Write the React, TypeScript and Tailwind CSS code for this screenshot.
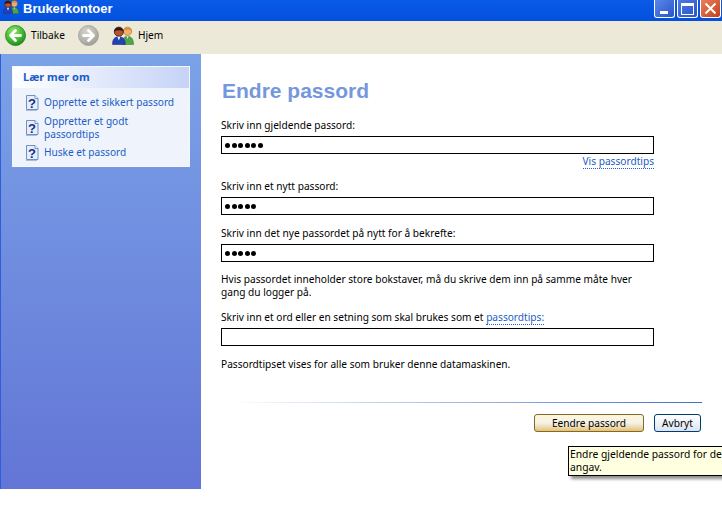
import React from "react";

const HelpIcon = () => (
  <svg width="14" height="17" viewBox="0 0 14 17" className="flex-none">
    <path d="M1.500 1.500h8.500l3 3v11h-11.500z" fill="#e6eefa" stroke="#6f90c8" />
    <path d="M12 16.500h-11" stroke="#a9bcdc" />
    <path d="M10 1.500v3h3" fill="#ffffff" stroke="#6f90c8" />
    <text x="7" y="13.500" textAnchor="middle" fontSize="13" fontWeight="700" fill="#17307f" fontFamily="Liberation Sans">?</text>
  </svg>
);

const CircleArrow = ({ dir, grey }: { dir: "left" | "right"; grey?: boolean }) => (
  <svg width="21" height="21" viewBox="0 0 21 21" className="flex-none">
    <defs>
      <radialGradient id={grey ? "gb" : "ga"} cx="0.4" cy="0.3" r="0.8">
        <stop offset="0" stopColor={grey ? "#d4d4ce" : "#8fe86a"} />
        <stop offset="0.6" stopColor={grey ? "#b4b4ac" : "#3fb52e"} />
        <stop offset="1" stopColor={grey ? "#94948c" : "#157a16"} />
      </radialGradient>
    </defs>
    <circle cx="10.500" cy="10.500" r="10" fill={`url(#${grey ? "gb" : "ga"})`} stroke={grey ? "#a0a098" : "#1f7f20"} strokeWidth="0.8" />
    {dir === "left" ? (
      <path d="M10.500 5.500 5.500 10.500 10.500 15.500M6 10.500H15.500" fill="none" stroke="#fff" strokeWidth="2.800" strokeLinecap="round" strokeLinejoin="round" />
    ) : (
      <path d="M10.500 5.500 15.500 10.500 10.500 15.500M15 10.500H5.500" fill="none" stroke="#fff" strokeWidth="2.800" strokeLinecap="round" strokeLinejoin="round" />
    )}
  </svg>
);

const UsersIcon = ({ size }: { size: number }) => (
  <svg width={size} height={size * 0.85} viewBox="0 0 24 20" className="flex-none">
    <circle cx="17" cy="5.500" r="4.500" fill="#eeb070" stroke="#c07a30" strokeWidth="0.8" />
    <path d="M12.500 4.500c1-3 8-3.500 9 0-3-1-6-1-9 0z" fill="#d98a2c" />
    <path d="M11 20c0-6 2-9 6-9s6.500 3 6.500 9z" fill="#4fa548" stroke="#2f7a2e" strokeWidth="0.6" />
    <path d="M16 11l1 3 1-3z" fill="#f6f6f0" />
    <circle cx="7.500" cy="6" r="5" fill="#b8532a" stroke="#2a1510" strokeWidth="0.8" />
    <path d="M2.500 6c-.5-6 9.500-6.500 10 0-3-2-7-2-10 0z" fill="#2a1510" />
    <path d="M0.500 20c0-6 2.500-8.500 7-8.500s7 2.500 7 8.500z" fill="#2440b4" stroke="#152a80" strokeWidth="0.6" />
    <path d="M6 11.500l1.500 4 1.500-4z" fill="#ffffff" />
  </svg>
);

const Field = ({ label, dots, className = "" }: { label: React.ReactNode; dots?: number; className?: string }) => (
  <div className={`flex flex-col ${className}`}>
    <div className="h-[14px] leading-[14px] text-black">{label}</div>
    <div className="mt-[4px] flex h-[18px] w-[433px] items-center gap-[1.600px] border border-black bg-white pl-[3px]">
      {Array.from({ length: dots ?? 0 }).map((_, i) => (
        <span key={i} className="h-[5px] w-[5px] rounded-full bg-black" />
      ))}
    </div>
  </div>
);

export default function App() {
  const links = ["Opprette et sikkert passord", "Oppretter et godt passordtips", "Huske et passord"];

  return (
    <div className="relative h-[512px] w-[722px] overflow-hidden bg-white font-['Noto_Sans',sans-serif] text-[10.150px]">
      {/* title bar */}
      <div className="flex h-[21px] items-start justify-between bg-gradient-to-b from-[#0a5be8] to-[#0450dc] pl-[3px] pr-[1px]">
        <div className="flex h-[17px] items-start gap-[4px] font-['Liberation_Sans',sans-serif]">
          <UsersIcon size={16} />
          <span className="mt-[1px] text-[13px] font-bold leading-[15px] text-white">Brukerkontoer</span>
        </div>
        <div className="flex items-start gap-[2px]">
          <div className="flex h-[18px] w-[21px] items-end rounded-b-[3px] border border-t-0 border-white bg-gradient-to-br from-[#5a86ea] to-[#2a55c8] pb-[3px] pl-[5px]">
            <div className="h-[3px] w-[8px] bg-white" />
          </div>
          <div className="flex h-[18px] w-[21px] items-center justify-center rounded-b-[3px] border border-t-0 border-white bg-gradient-to-br from-[#4c7ae6] to-[#2a55c8]">
            <div className="h-[12px] w-[13px] border border-t-[3px] border-white" />
          </div>
          <div className="flex h-[18px] w-[21px] items-center justify-center rounded-b-[3px] border border-t-0 border-white bg-gradient-to-br from-[#e8805c] to-[#c63d14]">
            <svg width="13" height="13" viewBox="0 0 13 13">
              <path d="M1.500 1.500l10 10M11.500 1.500l-10 10" stroke="#fff" strokeWidth="2" />
            </svg>
          </div>
        </div>
      </div>

      {/* toolbar */}
      <div className="flex h-[33px] items-center bg-[#ece9d8] pb-[4px] pl-[5px] text-black">
        <CircleArrow dir="left" />
        <span className="ml-[5px] w-[33px]">Tilbake</span>
        <div className="ml-[14px]">
          <CircleArrow dir="right" grey />
        </div>
        <div className="ml-[13px]">
          <UsersIcon size={22} />
        </div>
        <span className="ml-[4px]">Hjem</span>
      </div>

      <div className="flex h-[435px]">
        {/* left panel */}
        <div className="h-full w-[201px] flex-none border-l border-[#2f5fd8] bg-gradient-to-b from-[#7ba2e7] to-[#6375d6] pl-[11px] pt-[12px]">
          <div className="w-[178px] border border-[#f4f7fd] bg-[#eff3fb]">
            <div className="flex h-[21px] items-center bg-gradient-to-r from-[#ffffff] to-[#c6d3f7] pl-[10px] text-[11px] font-bold text-[#215dc6]">
              Lær mer om
            </div>
            <div className="flex flex-col gap-[3.500px] pb-[5px] pl-[12px] pt-[6px]">
              {links.map((l) => (
                <div key={l} className="flex items-center gap-[5px]">
                  <HelpIcon />
                  <span className="w-[135px] leading-[13px] text-[#215dc6]">{l}</span>
                </div>
              ))}
            </div>
          </div>
        </div>

        {/* main */}
        <div className="flex-1 pl-[20px] pt-[24px]">
          <h1 className="ml-[1px] h-[26px] font-['Liberation_Sans',sans-serif] text-[21px] font-bold leading-[26px] text-[#7597dc]">Endre passord</h1>
          <Field className="mt-[14px]" label="Skriv inn gjeldende passord:" dots={6} />
          <div className="h-[14px] w-[433px] text-right leading-[14px] text-[#215dc6]">
            <span className="border-b border-dotted border-[#215dc6]">Vis passordtips</span>
          </div>
          <Field className="mt-[11px]" label="Skriv inn et nytt passord:" dots={5} />
          <Field className="mt-[11px]" label="Skriv inn det nye passordet på nytt for å bekrefte:" dots={5} />
          <p className="mt-[11px] w-[425px] leading-[13px] text-black">
            Hvis passordet inneholder store bokstaver, må du skrive dem inn på samme måte hver gang du logger på.
          </p>
          <Field
            className="mt-[11px]"
            label={
              <>
                Skriv inn et ord eller en setning som skal brukes som et{" "}
                <span className="border-b border-dotted border-[#215dc6] text-[#215dc6]">passordtips:</span>
              </>
            }
          />
          <p className="mt-[11px] h-[14px] leading-[14px] text-black">Passordtipset vises for alle som bruker denne datamaskinen.</p>
          <div className="ml-[9px] mt-[31px] h-[1px] w-[472px] bg-gradient-to-r from-[#ffffff] to-[#3f6fc4]" />
          <div className="mt-[11px] flex w-[480px] justify-end gap-[10px]">
            <button className="h-[18px] w-[110px] rounded-[3px] border border-[#7f6a2c] bg-gradient-to-b from-[#fff6d8] via-[#f4f2ea] to-[#e8c170] leading-[14px] text-black">
              Eendre passord
            </button>
            <button className="h-[18px] w-[47px] rounded-[3px] border border-[#003c74] bg-gradient-to-b from-[#ffffff] to-[#dce4f2] leading-[14px] text-black">
              Avbryt
            </button>
          </div>
        </div>
      </div>

      {/* tooltip */}
      <div className="absolute left-[568px] top-[446px] h-[30px] w-[170px] whitespace-nowrap border border-black bg-[#ffffe1] pl-[1px] pt-[1px] text-[10.300px] leading-[13px] text-black shadow-[3px_3px_3px_rgba(0,0,0,0.45)]">
        Endre gjeldende passord for de
        <br />
        angav.
      </div>
    </div>
  );
}
